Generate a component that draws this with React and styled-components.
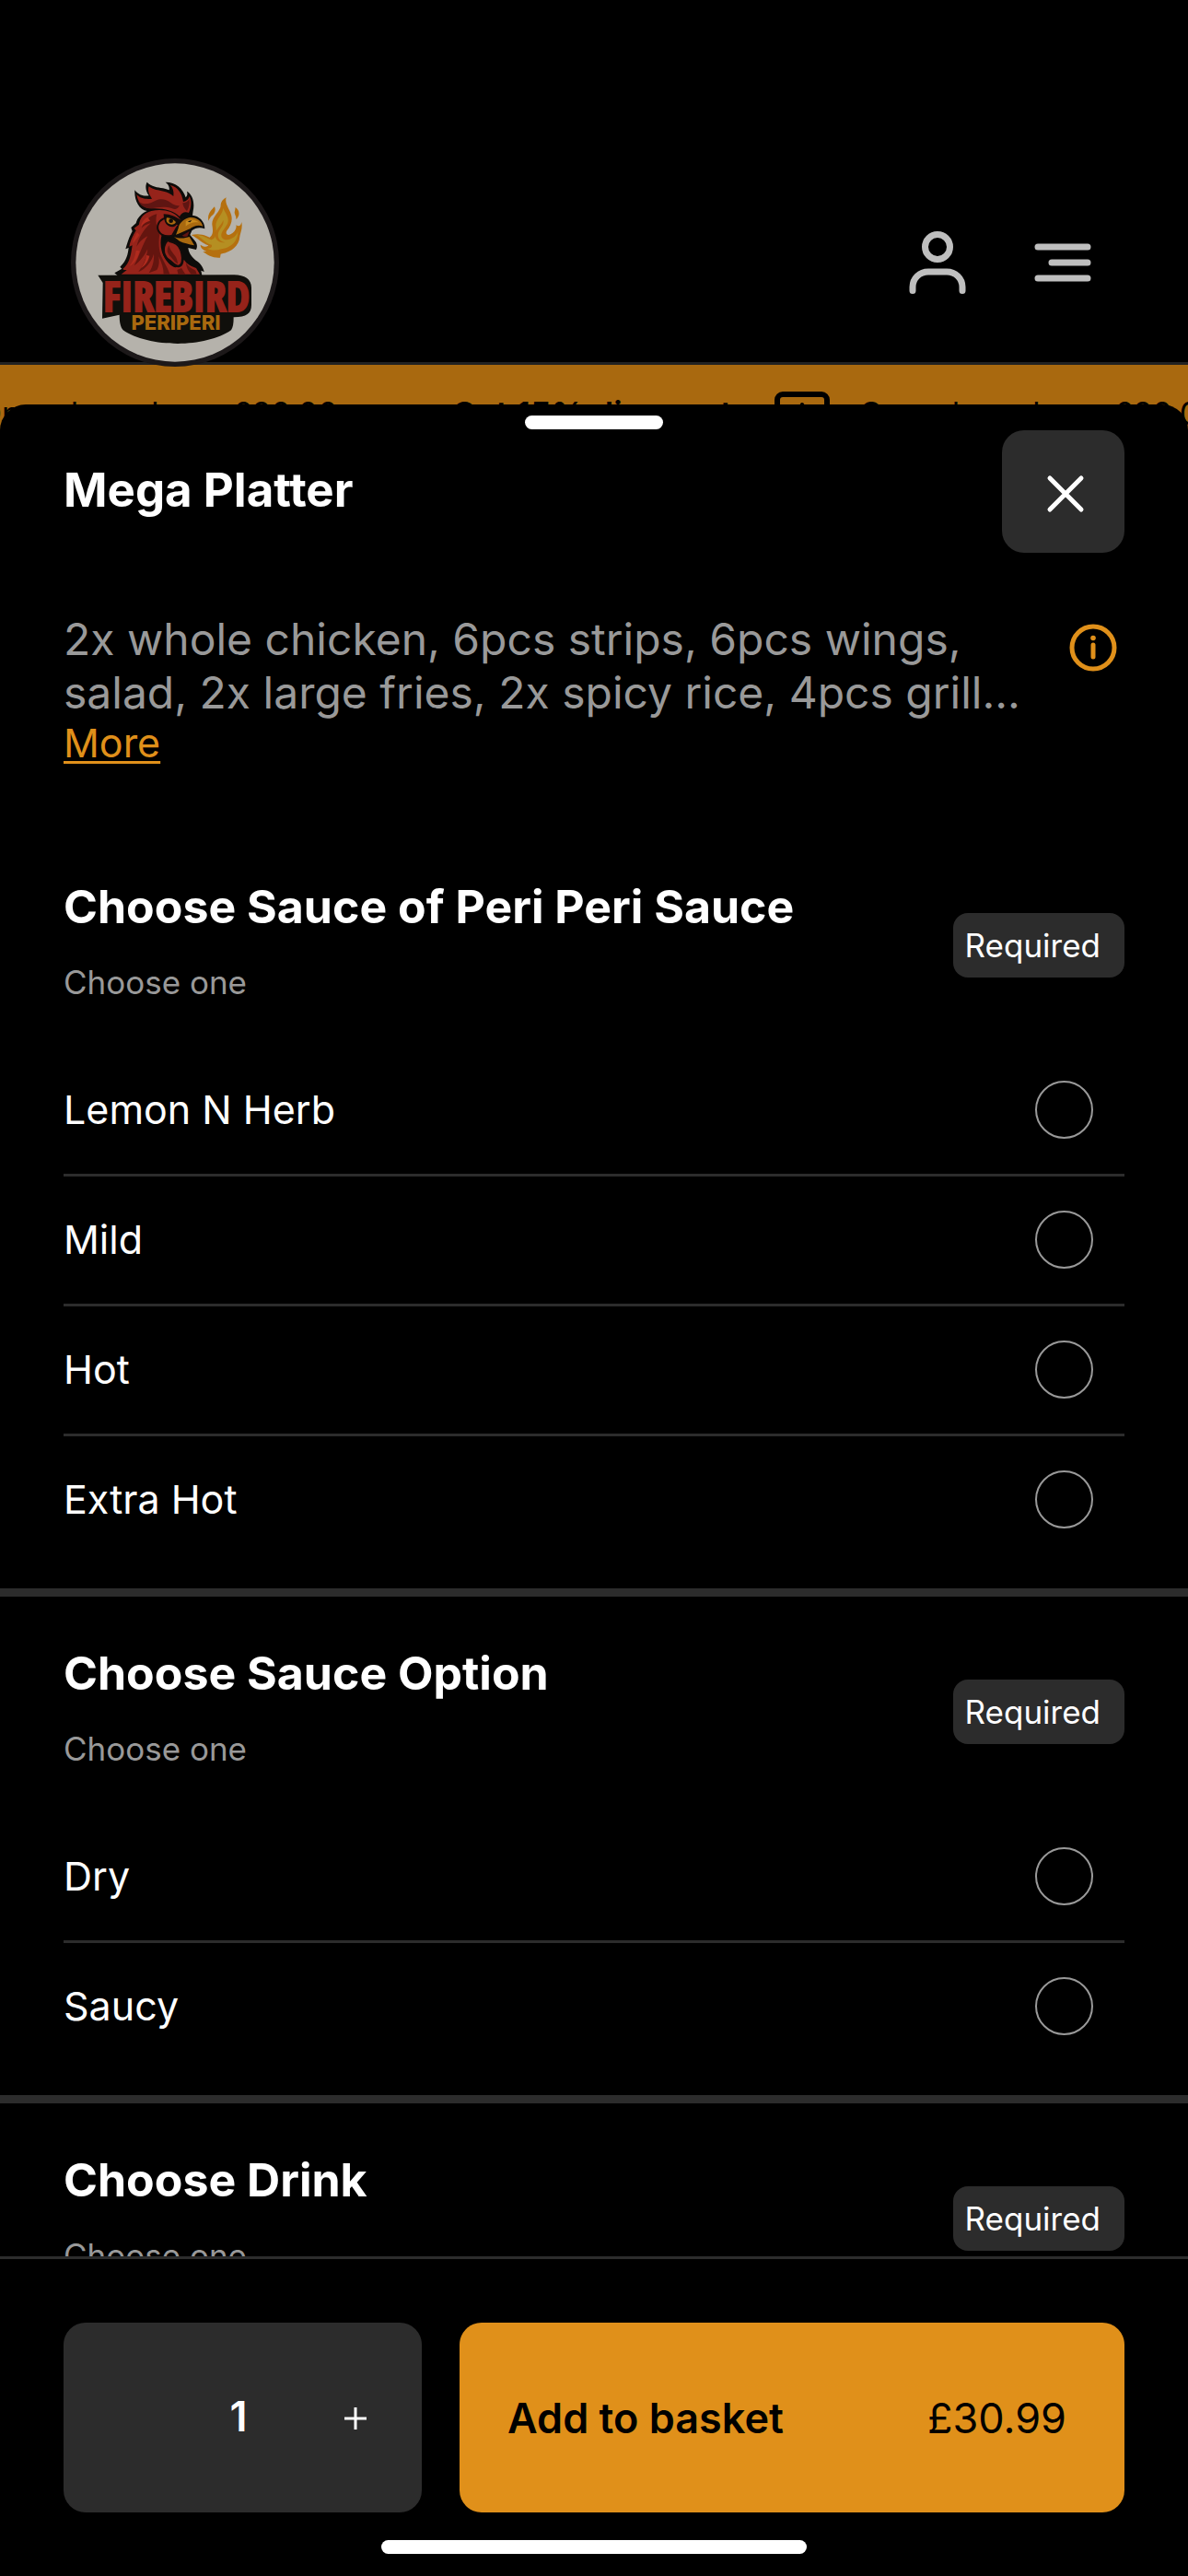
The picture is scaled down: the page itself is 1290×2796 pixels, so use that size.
import React, { useState } from "react";
import styled, { createGlobalStyle } from "styled-components";

const color = {
  page: "#000000",
  surface: "#2c2c2c",
  text: "#ffffff",
  muted: "#999999",
  dimmed: "#bfbfbf",
  accent: "#e0901a",
  accentDim: "#a9690f",
};

const GlobalStyle = createGlobalStyle`
  *, *::before, *::after { box-sizing: border-box; }
  body {
    margin: 0;
    background: ${color.page};
    color: ${color.text};
    font-family: Inter, "Liberation Sans", sans-serif;
  }
  button, input { font: inherit; color: inherit; }
  button { margin: 0; padding: 0; border: 0; background: none; cursor: pointer; }
  h1, h2, p, fieldset { margin: 0; padding: 0; border: 0; }
`;

const Screen = styled.div`
  display: flex;
  flex-direction: column;
  height: 100vh;
  overflow: hidden;
`;

/* ---------- dimmed page behind the sheet ---------- */

const Header = styled.header`
  position: relative;
  z-index: 1;
  display: flex;
  align-items: center;
  justify-content: space-between;
  padding: 172px 95px 0 77px;
  border-bottom: 3px solid #222222;
`;

const LogoLink = styled.a`
  display: block;
  width: 226px;
  height: 226px;
  margin-bottom: -5px;
`;

const HeaderActions = styled.nav`
  display: flex;
  gap: 54px;
  padding-top: 4px;
`;

const IconButton = styled.button`
  display: grid;
  place-items: center;
  width: 82px;
  height: 82px;
  color: ${color.dimmed};
`;

const Promo = styled.div`
  flex: none;
  display: flex;
  align-items: center;
  height: 106px;
  overflow: hidden;
  background: ${color.accentDim};
  color: #000000;
  white-space: nowrap;
`;

const PromoTrack = styled.div`
  flex: none;
  display: flex;
  align-items: center;
  margin-left: -24px;
`;

const PromoText = styled.span`
  font-size: 34px;
  line-height: 48px;
`;

const PromoStrong = styled.strong`
  margin-left: 124px;
  margin-right: 46px;
  font-size: 36px;
  line-height: 48px;
  font-weight: 600;
`;

const TicketIcon = styled.svg`
  flex: none;
  width: 60px;
  height: 48px;
  margin-right: 32px;
`;

/* ---------- sheet ---------- */

const Sheet = styled.main`
  position: relative;
  z-index: 2;
  flex: 1;
  min-height: 0;
  display: flex;
  flex-direction: column;
  margin-top: -63px;
  padding-top: 12px;
  border-radius: 28px 28px 0 0;
  background: ${color.page};
`;

const Pill = styled.div`
  flex: none;
  align-self: center;
  width: ${(p) => p.$width}px;
  height: 15px;
  border-radius: 8px;
  background: #ffffff;
`;

const SheetHeader = styled.div`
  display: flex;
  align-items: center;
  justify-content: space-between;
  padding: 1px 69px 0;
`;

const Title = styled.h1`
  padding-bottom: 4px;
  font-size: 51px;
  line-height: 56px;
  font-weight: 700;
`;

const CloseButton = styled.button`
  display: grid;
  place-items: center;
  width: 133px;
  height: 133px;
  padding-left: 4px;
  padding-top: 4px;
  border-radius: 24px;
  background: ${color.surface};
`;

const SheetBody = styled.div`
  flex: 1;
  min-height: 0;
  overflow: hidden;
`;

const Description = styled.div`
  display: flex;
  align-items: flex-start;
  justify-content: space-between;
  padding: 65px 73px 70px 69px;
`;

const DescriptionText = styled.div`
  flex: 1;
  max-width: 1056px;
`;

const Copy = styled.p`
  color: ${color.muted};
  font-size: 48px;
  line-height: 58px;
`;

const MoreLink = styled.a`
  display: block;
  width: max-content;
  color: ${color.accent};
  font-size: 43px;
  line-height: 50px;
  text-decoration-thickness: 3px;
  text-underline-offset: 4px;
  text-decoration-skip-ink: none;
`;

const InfoButton = styled.button`
  flex: none;
  display: grid;
  place-items: center;
  width: 60px;
  height: 60px;
  margin-top: 8px;
  color: ${color.accent};
`;

const Group = styled.fieldset`
  min-width: 0;
  padding: 55px 69px 27px;

  & + & {
    border-top: 9px solid ${color.surface};
  }
`;

const GroupHead = styled.div`
  display: flex;
  align-items: center;
  justify-content: space-between;
  margin-bottom: 40px;
`;

const GroupTitles = styled.div`
  display: grid;
  gap: 24px;
`;

const GroupTitle = styled.h2`
  font-size: 50px;
  line-height: 56px;
  font-weight: 700;
`;

const GroupHint = styled.p`
  color: ${color.muted};
  font-size: 35px;
  line-height: 60px;
`;

const Badge = styled.span`
  padding: 0 26px 0 13px;
  border-radius: 16px;
  background: ${color.surface};
  font-size: 35px;
  line-height: 70px;
`;

const Option = styled.label`
  display: flex;
  align-items: center;
  justify-content: space-between;
  height: 138px;
  padding-right: 34px;
  padding-bottom: 2px;
  font-size: 43px;
  cursor: pointer;

  & + & {
    height: 141px;
    border-top: 3px solid ${color.surface};
  }
`;

const Radio = styled.input`
  appearance: none;
  width: 63px;
  height: 63px;
  margin: 0;
  border: 2px solid ${color.muted};
  border-radius: 50%;

  &:checked {
    border: 18px solid ${color.accent};
  }
`;

const Footer = styled.footer`
  flex: none;
  display: flex;
  flex-direction: column;
  gap: 30px;
  padding: 69px 69px 24px;
  border-top: 3px solid ${color.surface};
`;

const FooterActions = styled.div`
  display: flex;
  gap: 41px;
  height: 206px;
`;

const Stepper = styled.div`
  display: grid;
  grid-template-columns: 1fr 1fr 1fr;
  align-items: center;
  width: 389px;
  padding-right: 9px;
  border-radius: 24px;
  background: ${color.surface};
`;

const StepButton = styled.button`
  display: grid;
  place-items: center;
  height: 100%;
  padding-top: 2px;
`;

const Quantity = styled.output`
  grid-column: 2;
  padding-bottom: 4px;
  text-align: center;
  font-size: 45px;
  font-weight: 600;
`;

const AddButton = styled.button`
  flex: 1;
  display: flex;
  align-items: center;
  justify-content: space-between;
  padding: 0 63px 0 52px;
  border-radius: 24px;
  background: ${color.accent};
  color: #000000;
  font-size: 45px;
`;

const AddLabel = styled.span`
  font-weight: 600;
`;

/* ---------- drawings ---------- */

function Logo() {
  return (
    <svg viewBox="50 35 678 678" width="226" height="226" role="img" aria-label="Firebird Periperi">
      <circle cx="389" cy="374" r="339" fill="#1c1819" />
      <circle cx="389" cy="374" r="323" fill="#b5b2ab" />
      {/* neck, head and comb outline */}
      <path
        fill="#0d0c0a"
        d="M192 408L216 394L210 388C232 368 236 344 238 326L228 330C234 308 240 290 250 272L246 260L262 246C266 228 280 214 298 206C272 202 256 172 258 138C272 156 288 158 304 156C292 140 292 122 298 112C312 128 332 128 350 132C358 134 364 136 370 138C372 126 366 118 358 112C392 112 416 134 424 162C430 156 430 150 428 142C446 152 454 178 448 206L446 220C466 222 486 238 486 264C470 258 456 260 444 270L438 284L456 306C462 316 462 324 458 332L432 326C434 344 444 358 462 370C476 380 482 394 484 404L474 400L478 420H206Z"
      />
      {/* comb */}
      <path
        fill="#96231a"
        d="M264 152C276 166 294 168 314 166C302 150 300 136 304 126C318 138 336 138 352 142C364 144 376 150 384 158C386 142 382 130 374 122C398 128 412 148 416 176C426 174 434 168 436 158C444 174 442 194 434 212C422 206 410 212 404 224C386 206 352 196 314 198C286 198 268 180 264 152Z"
      />
      <path
        fill="#5f1512"
        d="M268 172C286 190 308 182 326 172C344 164 360 168 374 178C384 186 396 190 404 188C398 200 390 202 380 198C356 190 334 194 312 198C290 198 276 188 268 172ZM414 180C424 180 430 176 436 168C438 184 434 198 428 206C422 200 416 194 414 180Z"
      />
      {/* head and neck feathers */}
      <path
        fill="#96231a"
        d="M312 206C350 198 384 208 400 226L412 240L394 262L384 284C372 288 358 282 350 270L344 292C340 316 344 340 356 360C364 374 376 386 390 390C404 388 414 378 418 364C428 380 444 386 458 392L470 412H214L232 398C222 398 218 398 218 396C244 376 246 342 250 318L240 322C244 300 252 286 262 270L256 262L272 250C274 230 288 212 312 206Z"
      />
      <path
        fill="#64150f"
        d="M330 216C308 220 288 240 280 262C292 250 302 248 310 246C288 266 270 292 264 322C276 302 288 294 300 288C282 318 274 350 256 384C276 370 290 350 300 330C296 360 286 384 270 404C294 394 312 372 320 346C322 372 314 392 304 408L330 398C338 384 338 370 336 354C346 376 352 392 352 412H372C366 392 352 372 342 348C334 322 336 296 340 276C328 262 324 238 330 216ZM424 372C430 386 444 394 456 400L460 412H442C432 402 426 390 424 372ZM396 398L410 392L424 414H400Z"
      />
      <path
        fill="#b02b1e"
        d="M300 226C286 232 280 246 278 256C288 246 298 240 308 238ZM266 276C256 290 252 302 252 312L274 284ZM262 334C260 352 254 370 240 386C258 378 270 356 274 336ZM296 350C294 368 286 382 278 392C292 384 302 370 306 352Z"
      />
      {/* cheek */}
      <path
        fill="#96231a"
        stroke="#150b09"
        strokeWidth="6"
        d="M350 232C334 240 328 258 336 272C344 286 362 290 380 286L394 262L410 240C394 240 370 222 350 232Z"
      />
      {/* eye */}
      <path fill="#120c0a" d="M352 216C374 216 392 226 410 236L414 220L424 240C416 250 404 252 394 250C384 264 362 258 356 240C354 232 352 226 352 216Z" />
      <path fill="#a9690f" d="M362 228C372 228 384 234 392 242C388 252 374 252 366 246C360 242 360 234 362 228Z" />
      <circle cx="376" cy="238" r="7" fill="#120c0a" />
      {/* beak, open */}
      <path fill="#a9690f" d="M400 262C402 246 416 234 434 228C456 224 476 238 480 256C464 250 446 256 436 266C424 272 408 280 392 284Z" />
      <path fill="#c98a1e" d="M424 240C438 230 458 234 468 244C450 240 436 246 424 256Z" />
      <path fill="#120c0a" d="M430 240L444 236L438 243Z" />
      <path fill="#120c0a" d="M392 284L438 264L430 292L392 294Z" />
      <path fill="#a9690f" d="M386 290C404 298 424 294 436 290L452 318C434 314 416 310 404 304Z" />
      <path fill="#5f1512" d="M412 286L436 272L430 288C424 291 418 290 412 286Z" />
      {/* wattle */}
      <path
        fill="#96231a"
        stroke="#120c0a"
        strokeWidth="8"
        d="M366 300C348 316 346 346 366 364C380 372 386 386 400 386C414 384 416 364 412 346C408 326 398 312 384 308C376 306 370 304 366 300Z"
      />
      <path fill="#64150f" d="M370 318C372 334 384 344 392 356C396 364 398 372 398 378C386 372 382 360 372 352C362 342 362 328 370 318Z" />
      {/* flame */}
      <path
        fill="#b5700f"
        d="M442 284C466 278 488 284 502 292C516 282 512 264 510 250C508 224 540 206 538 186C538 178 544 168 556 162C550 182 566 198 572 218C578 238 570 256 558 270C552 280 560 288 570 282C588 272 590 258 588 252C600 260 604 250 606 242C610 262 602 276 600 290C598 318 574 340 538 346L536 358C514 360 494 350 480 338L492 338C478 332 472 324 472 316C488 326 494 322 498 318C478 312 466 296 442 284Z"
      />
      <path
        fill="#b58f22"
        d="M458 284C480 284 494 296 508 300C526 294 524 272 522 252C522 234 544 218 546 196C552 212 564 222 562 240C560 256 544 266 540 282C538 298 556 304 572 296C586 290 592 280 594 272C594 304 572 326 540 330C522 336 504 334 494 328C506 328 512 322 508 316C488 312 478 294 458 284Z"
      />
      <path
        fill="#b5700f"
        d="M546 236C550 252 534 264 530 278C526 296 538 306 552 308C534 312 520 300 520 284C520 266 540 254 546 236Z"
      />
      <path fill="#b5700f" d="M518 192C524 206 516 218 506 224C502 230 500 234 498 238C494 216 506 204 518 192ZM586 194C600 204 602 220 588 234C590 222 580 216 584 206Z" />
      {/* name plate */}
      <path
        fill="#100f0b"
        d="M138 415L580 414C616 414 638 428 638 456V512C638 540 622 552 580 552C580 572 578 586 572 594C534 622 462 638 398 638C330 638 258 622 220 594C212 584 208 570 208 544L152 556L154 440Z"
      />
      <text
        x="394"
        y="534"
        textAnchor="middle"
        fill="#96231a"
        stroke="#96231a"
        strokeWidth="6"
        fontFamily="'Open Sans Condensed', 'Roboto Condensed', sans-serif"
        fontWeight="700"
        fontSize="136"
      >
        FIREBIRD
      </text>
      <text
        x="392"
        y="594"
        textAnchor="middle"
        fill="#a9690f"
        fontFamily="Inter, sans-serif"
        fontWeight="800"
        fontSize="66"
      >
        PERIPERI
      </text>
    </svg>
  );
}

const UserIcon = () => (
  <svg width="82" height="82" viewBox="0 0 82 82" fill="none" stroke="currentColor" strokeWidth="7" strokeLinecap="round">
    <circle cx="41" cy="24" r="13.5" />
    <path d="M14 71.500V67.500C14 58 21.500 51 31 51H51C60.500 51 68 58 68 67.500V71.500" />
  </svg>
);

const MenuIcon = () => (
  <svg width="82" height="82" viewBox="0 0 82 82" fill="none" stroke="currentColor" strokeWidth="7" strokeLinecap="round">
    <path d="M14 24H68M29 41H68M14 58H68" />
  </svg>
);

const CloseIcon = () => (
  <svg width="46" height="46" viewBox="0 0 46 46" fill="none" stroke="currentColor" strokeWidth="5" strokeLinecap="round">
    <path d="M6 6L40 40M40 6L6 40" />
  </svg>
);

const InfoIcon = () => (
  <svg width="60" height="60" viewBox="0 0 60 60" fill="none" stroke="currentColor" strokeWidth="5" strokeLinecap="round">
    <circle cx="30" cy="30" r="23" />
    <path d="M30 27V40" />
    <circle cx="30" cy="19.500" r="2.800" fill="currentColor" stroke="none" />
  </svg>
);

const PlusIcon = () => (
  <svg width="26" height="26" viewBox="0 0 26 26" fill="none" stroke="currentColor" strokeWidth="3">
    <path d="M13 1V25M1 13H25" />
  </svg>
);

const Ticket = () => (
  <TicketIcon viewBox="0 0 60 48" fill="none" stroke="currentColor" strokeWidth="6" aria-hidden="true">
    <rect x="3" y="3" width="54" height="42" rx="6" />
    <path
      d="M30 14L33 20H41L35 26L37 35L30 30L23 35L25 26L19 20H27Z"
      fill="currentColor"
      strokeWidth="4"
      strokeLinejoin="round"
    />
  </TicketIcon>
);

/* ---------- content ---------- */

const groups = [
  { id: "peri", title: "Choose Sauce of Peri Peri Sauce", options: ["Lemon N Herb", "Mild", "Hot", "Extra Hot"] },
  { id: "sauce", title: "Choose Sauce Option", options: ["Dry", "Saucy"] },
  { id: "drink", title: "Choose Drink", options: [] },
];

function OptionGroup({ group }) {
  return (
    <Group aria-labelledby={`${group.id}-title`}>
      <GroupHead>
        <GroupTitles>
          <GroupTitle id={`${group.id}-title`}>{group.title}</GroupTitle>
          <GroupHint>Choose one</GroupHint>
        </GroupTitles>
        <Badge>Required</Badge>
      </GroupHead>
      {group.options.map((name) => (
        <Option key={name}>
          {name}
          <Radio type="radio" name={group.id} value={name} />
        </Option>
      ))}
    </Group>
  );
}

export default function App() {
  const [quantity, setQuantity] = useState(1);
  const total = (30.99 * quantity).toFixed(2);

  return (
    <Screen>
      <GlobalStyle />
      <Header>
        <LogoLink href="#home">
          <Logo />
        </LogoLink>
        <HeaderActions>
          <IconButton aria-label="Account">
            <UserIcon />
          </IconButton>
          <IconButton aria-label="Menu">
            <MenuIcon />
          </IconButton>
        </HeaderActions>
      </Header>
      <Promo>
        <PromoTrack>
          <PromoText>On orders above £20.00</PromoText>
          <PromoStrong>Get 15% discount</PromoStrong>
          <Ticket />
          <PromoText>On orders above £20.00</PromoText>
        </PromoTrack>
      </Promo>
      <Sheet>
        <Pill $width={150} />
        <SheetHeader>
          <Title>Mega Platter</Title>
          <CloseButton aria-label="Close">
            <CloseIcon />
          </CloseButton>
        </SheetHeader>
        <SheetBody>
          <Description>
            <DescriptionText>
              <Copy>2x whole chicken, 6pcs strips, 6pcs wings, salad, 2x large fries, 2x spicy rice, 4pcs grill...</Copy>
              <MoreLink href="#more">More</MoreLink>
            </DescriptionText>
            <InfoButton aria-label="Allergen information">
              <InfoIcon />
            </InfoButton>
          </Description>
          {groups.map((group) => (
            <OptionGroup key={group.id} group={group} />
          ))}
        </SheetBody>
        <Footer>
          <FooterActions>
            <Stepper>
              <Quantity>{quantity}</Quantity>
              <StepButton aria-label="Increase quantity" onClick={() => setQuantity(quantity + 1)}>
                <PlusIcon />
              </StepButton>
            </Stepper>
            <AddButton>
              <AddLabel>Add to basket</AddLabel>
              <span>£{total}</span>
            </AddButton>
          </FooterActions>
          <Pill $width={462} />
        </Footer>
      </Sheet>
    </Screen>
  );
}
